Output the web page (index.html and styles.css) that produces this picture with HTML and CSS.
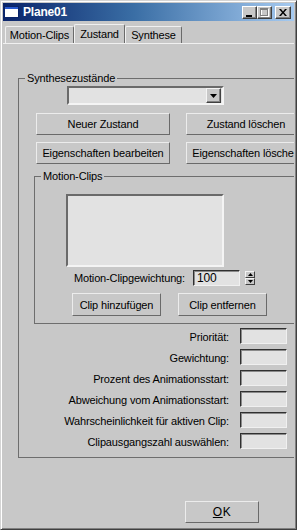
FILE: index.html
```html
<!DOCTYPE html>
<html lang="de">

<head>
    <meta charset="UTF-8">
    <meta name="viewport" content="width=device-width, initial-scale=1.0">
    <title>Plane01</title>
    <link rel="stylesheet" href="styles.css">
</head>

<body>

    <div class="window">
        <div class="titlebar">
            <svg class="app-icon" width="15" height="12" viewBox="0 0 15 12">
                <rect x="0.5" y="0.5" width="14" height="11" fill="#ffffff" stroke="#0a246a" />
                <rect x="1" y="1" width="13" height="2" fill="#2a5bd0" />
            </svg>
            <span class="title">Plane01</span>
            <div class="caption-buttons">
                <span class="cap-btn">
                    <svg width="6" height="2" viewBox="0 0 6 2" class="glyph-min"><rect width="6" height="2" fill="#000" /></svg>
                </span>
                <span class="cap-btn">
                    <svg width="9" height="9" viewBox="0 0 9 9">
                        <rect x="1.5" y="1.5" width="7" height="7" fill="none" stroke="#ffffff" />
                        <rect x="0.5" y="0.5" width="7" height="7" fill="none" stroke="#808080" />
                        <rect x="0" y="0" width="8" height="2" fill="#808080" />
                    </svg>
                </span>
                <span class="cap-btn close">
                    <svg width="8" height="7" viewBox="0 0 8 7">
                        <path d="M0 0h2l2 2.5 2-2.5h2l-3 3.5 3 3.5h-2l-2-2.5-2 2.5h-2l3-3.5z" fill="#000" />
                    </svg>
                </span>
            </div>
        </div>

        <div class="tabs">
            <span class="tab tab-clips">Motion-Clips</span>
            <span class="tab tab-state active">Zustand</span>
            <span class="tab tab-synth">Synthese</span>
        </div>

        <div class="page">
            <fieldset class="group main-group">
                <legend>Synthesezustände</legend>

                <div class="combo">
                    <span class="combo-btn">
                        <svg width="7" height="4" viewBox="0 0 7 4"><path d="M0 0h7l-3.5 4z" fill="#000" /></svg>
                    </span>
                </div>

                <div class="btn-row">
                    <button class="btn wide">Neuer Zustand</button>
                    <button class="btn cut">Zustand löschen</button>
                </div>
                <div class="btn-row second">
                    <button class="btn wide">Eigenschaften bearbeiten</button>
                    <button class="btn cut">Eigenschaften löschen</button>
                </div>

                <fieldset class="group clips-group">
                    <legend>Motion-Clips</legend>
                    <div class="listbox"></div>

                    <div class="spin-row">
                        <span class="spin-label">Motion-Clipgewichtung:</span>
                        <span class="edit value">100</span>
                        <span class="spinner">
                            <span class="spin-btn">
                                <svg width="5" height="3" viewBox="0 0 5 3"><path d="M2.5 0l2.5 3h-5z" fill="#000" /></svg>
                            </span>
                            <span class="spin-btn">
                                <svg width="5" height="3" viewBox="0 0 5 3"><path d="M0 0h5l-2.5 3z" fill="#000" /></svg>
                            </span>
                        </span>
                    </div>

                    <div class="btn-row clip-buttons">
                        <button class="btn clip">Clip hinzufügen</button>
                        <button class="btn clip">Clip entfernen</button>
                    </div>
                </fieldset>

                <div class="fields">
                    <div class="field"><span class="field-label">Priorität:</span><span class="edit"></span></div>
                    <div class="field"><span class="field-label">Gewichtung:</span><span class="edit"></span></div>
                    <div class="field"><span class="field-label">Prozent des Animationsstart:</span><span class="edit"></span></div>
                    <div class="field"><span class="field-label">Abweichung vom Animationsstart:</span><span class="edit"></span></div>
                    <div class="field"><span class="field-label">Wahrscheinlichkeit für aktiven Clip:</span><span class="edit"></span></div>
                    <div class="field"><span class="field-label">Clipausgangszahl auswählen:</span><span class="edit"></span></div>
                </div>
            </fieldset>
        </div>

        <div class="footer">
            <button class="btn ok"><u>O</u>K</button>
        </div>
    </div>

</body>

</html>
```

FILE: styles.css
```css
body {
    margin: 0;
    background-color: #c8c8c8;
    font-family: "Liberation Sans", Arial, sans-serif;
    font-size: 11px;
    letter-spacing: -0.15px;
    color: #000000;
}

/* Window frame */
.window {
    width: 297px;
    height: 530px;
    box-sizing: border-box;
    border: 1px solid;
    border-color: #d4d4d4 #404040 #404040 #d4d4d4;
    padding: 2px;
    box-shadow: inset 1px 1px #ffffff, inset -1px -1px #808080;
    display: flex;
    flex-direction: column;
    overflow: hidden;
    background-color: #c8c8c8;
}

.titlebar {
    height: 18px;
    flex: none;
    display: flex;
    align-items: center;
    padding: 0 3px 0 1px;
    background: linear-gradient(to right, #0a246a, #3a6ea5 45%, #a6caf0);
    color: #ffffff;
}

.app-icon {
    flex: none;
}

.title {
    margin-left: 4px;
    font-size: 12px;
    font-weight: bold;
    letter-spacing: -0.2px;
}

.caption-buttons {
    margin-left: auto;
    display: flex;
    align-self: flex-start;
    margin-top: 3px;
}

.cap-btn {
    width: 15px;
    height: 13px;
    box-sizing: border-box;
    border: 1px solid;
    border-color: #ffffff #404040 #404040 #ffffff;
    box-shadow: inset -1px -1px #808080;
    background-color: #c8c8c8;
    display: flex;
    align-items: center;
    justify-content: center;
}

.cap-btn .glyph-min {
    margin-top: 6px;
    margin-right: 1px;
}

.cap-btn.close {
    width: 16px;
    margin-left: 3px;
}

/* Tabs */
.tabs {
    flex: none;
    height: 22px;
    display: flex;
    align-items: flex-end;
    padding-left: 2px;
    border-bottom: 1px solid #f0f0f0;
}

.tab {
    height: 17px;
    box-sizing: border-box;
    border: 1px solid;
    border-bottom: none;
    border-color: #f0f0f0 #6a6a6a #6a6a6a #f0f0f0;
    border-radius: 2px 2px 0 0;
    display: flex;
    align-items: center;
    justify-content: center;
    padding-bottom: 1px;
}

.tab.active {
    height: 19px;
}

.tab-clips {
    width: 69px;
}

.tab-state {
    width: 51px;
}

.tab-synth {
    width: 57px;
}

/* Page content */
.page {
    flex: none;
    padding-left: 15px;
    overflow: hidden;
}

.group {
    margin: 0;
    padding: 0;
    border: 1px solid #6e6e6e;
    box-sizing: border-box;
}

.group legend {
    padding: 0 2px;
    margin-left: 6px;
    line-height: 13px;
}

.main-group {
    margin-top: 28px;
    width: 300px;
    min-width: 300px;
    padding-top: 1px;
    padding-bottom: 8px;
}

.combo {
    margin-left: 48px;
    width: 157px;
    height: 19px;
    box-sizing: border-box;
    border: 2px solid;
    border-color: #6a6a6a #f4f4f4 #f4f4f4 #6a6a6a;
    background-color: #e2e2e2;
    display: flex;
    justify-content: flex-end;
    align-items: center;
    padding-right: 1px;
}

.combo-btn {
    width: 15px;
    height: 15px;
    box-sizing: border-box;
    border: 1px solid;
    border-color: #f4f4f4 #404040 #404040 #f4f4f4;
    box-shadow: inset -1px -1px #808080;
    background-color: #c8c8c8;
    display: flex;
    align-items: center;
    justify-content: center;
}

.btn-row {
    display: flex;
    gap: 16px;
    margin-left: 17px;
    margin-top: 8px;
}

.btn-row.second {
    margin-top: 7px;
}

.btn {
    font: inherit;
    letter-spacing: inherit;
    color: #000000;
    background-color: #c8c8c8;
    border: 1px solid;
    border-color: #ececec #6a6a6a #6a6a6a #ececec;
    border-radius: 0;
    padding: 0;
    margin: 0;
    white-space: nowrap;
    overflow: hidden;
    flex: none;
}

.btn.wide {
    width: 134px;
    height: 22px;
}

.btn.cut {
    width: 120px;
    height: 22px;
}

.clips-group {
    margin-top: 6px;
    margin-left: 15px;
    width: 272px;
    padding-bottom: 7px;
}

.listbox {
    margin-top: 11px;
    margin-left: 31px;
    width: 158px;
    height: 73px;
    box-sizing: border-box;
    border: 2px solid;
    border-color: #6a6a6a #f4f4f4 #f4f4f4 #6a6a6a;
    background-color: #e2e2e2;
}

.spin-row {
    display: flex;
    align-items: center;
    margin-top: 3px;
    margin-left: 31px;
    height: 16px;
}

.spin-label {
    width: 119px;
    text-align: right;
}

.edit {
    width: 47px;
    height: 16px;
    box-sizing: border-box;
    border: 1px solid;
    border-color: #303030 #f0f0f0 #f0f0f0 #303030;
    box-shadow: inset 1px 1px #8a8a8a;
    background-color: #e2e2e2;
    flex: none;
}

.edit.value {
    margin-left: 8px;
    padding-left: 3px;
    line-height: 14px;
    font-size: 12px;
}

.spinner {
    margin-left: 5px;
    width: 10px;
    display: flex;
    flex-direction: column;
}

.spin-btn {
    height: 7px;
    box-sizing: border-box;
    border: 1px solid;
    border-color: #f4f4f4 #404040 #404040 #f4f4f4;
    display: flex;
    align-items: center;
    justify-content: center;
}

.clip-buttons {
    margin-left: 37px;
    margin-top: 7px;
    gap: 17px;
}

.btn.clip {
    width: 89px;
    height: 23px;
}

.fields {
    margin-top: 4px;
    display: flex;
    flex-direction: column;
    gap: 5px;
}

.field {
    display: flex;
    align-items: center;
    gap: 11px;
}

.field-label {
    width: 210px;
    text-align: right;
    padding-top: 2px;
}

/* Bottom button */
.footer {
    margin-top: auto;
    padding: 0 0 4px 182px;
}

.btn.ok {
    width: 74px;
    height: 22px;
    font-size: 12px;
    letter-spacing: 0.5px;
}
```
